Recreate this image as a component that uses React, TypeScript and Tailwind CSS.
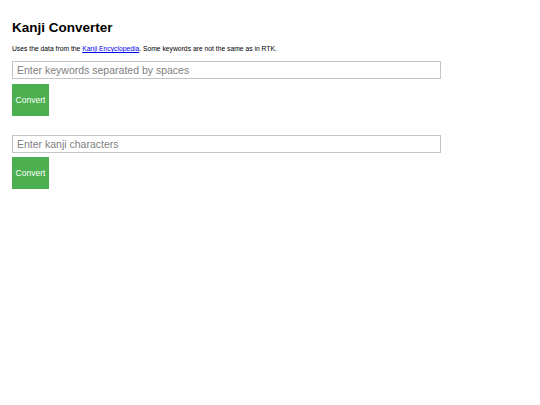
import React, { useState } from 'react';

// kanji converter page
export default function App() {
  const [keywords, setKeywords] = useState('');
  const [kanji, setKanji] = useState('');

  return (
    <div className="w-full min-h-[405px] bg-white px-[12px] font-['Liberation_Sans',Arial,sans-serif] text-black">
      <h1 className="pt-[20px] text-[13.5px] leading-[16px] font-bold">Kanji Converter</h1>
      <p className="mt-[9px] text-[6.75px] leading-[8px]">
        Uses the data from the{' '}
        <a href="#" className="text-[#0000ee] underline">Kanji Encyclopedia</a>
        . Some keywords are not the same as in RTK.
      </p>

      <div className="mt-[8px] flex flex-col items-start">
        <input
          value={keywords}
          onChange={(e) => setKeywords(e.target.value)}
          placeholder="Enter keywords separated by spaces"
          className="w-[429px] h-[18px] border border-[#c4c4c4] px-[4px] text-[10.5px] leading-[16px] outline-none placeholder:text-[#808080]"
        />
        <button className="mt-[5px] w-[37px] h-[32px] bg-[#4caf50] text-white text-[8.5px]">Convert</button>
      </div>

      <div className="mt-[19px] flex flex-col items-start">
        <input
          value={kanji}
          onChange={(e) => setKanji(e.target.value)}
          placeholder="Enter kanji characters"
          className="w-[429px] h-[18px] border border-[#c4c4c4] px-[4px] text-[10.5px] leading-[16px] outline-none placeholder:text-[#808080]"
        />
        <button className="mt-[4px] w-[37px] h-[32px] bg-[#4caf50] text-white text-[8.5px]">Convert</button>
      </div>
    </div>
  );
}
